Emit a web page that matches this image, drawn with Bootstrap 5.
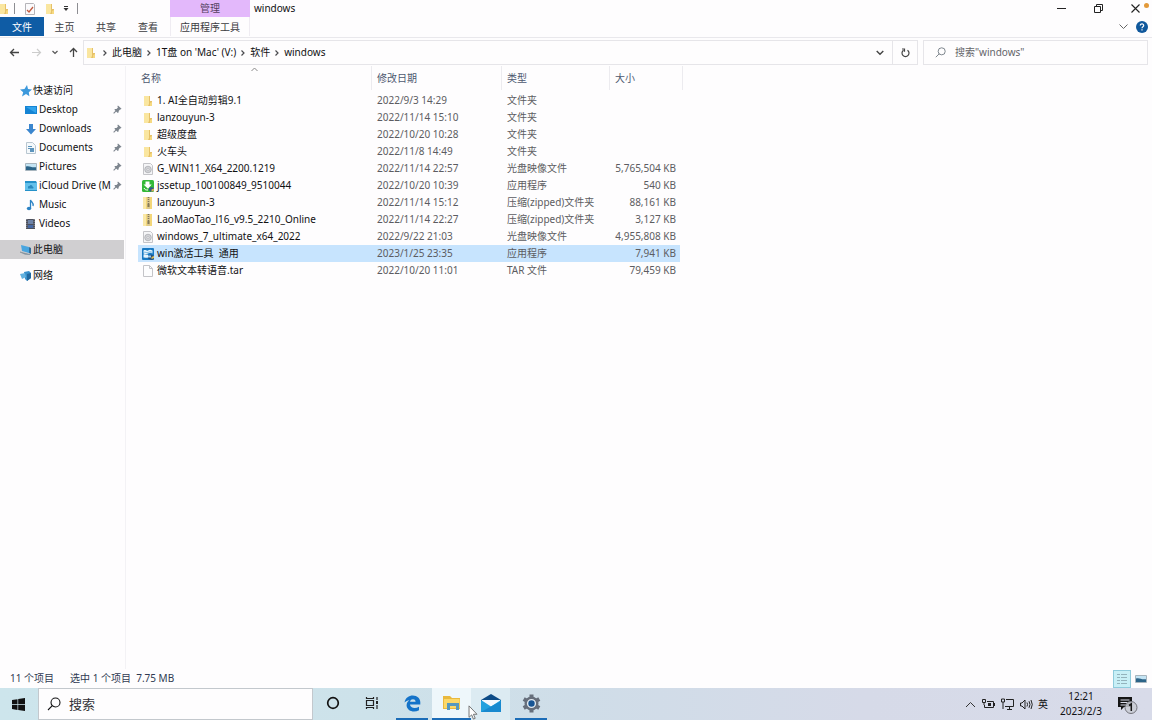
<!DOCTYPE html>
<html lang="zh-CN">
<head>
<meta charset="utf-8">
<meta name="viewport" content="width=device-width, initial-scale=1">
<title>windows</title>
<link href="https://cdn.jsdelivr.net/npm/bootstrap@5.3.0/dist/css/bootstrap.min.css" rel="stylesheet">
<style>
  body { font-family: "Noto Sans", "Noto Sans CJK SC", sans-serif; font-size: 10px; line-height: 17px; color: #111113; background: #fefdfe; }
  button, input { font: inherit; color: inherit; }
  svg { display: block; flex: none; }
  a { color: inherit; text-decoration: none; }
  .plain { background: none; border: 0; padding: 0; display: flex; align-items: center; justify-content: center; }

  /* title bar and ribbon */
  .ribbon { border-bottom: 1px solid #e9e8ec; }
  .quick { width: 170px; height: 17px; }
  .quick > * { margin-right: 6px; }
  .quick .quick-icon { width: 14px; margin-left: 2px; }
  .vline { width: 1px; height: 11px; background: #8d8d92; margin-left: 2px; }
  .tool-title { width: 80px; height: 17px; background: #e3b8fb; color: #54405f; }
  .tabs-row { height: 20px; }
  .tab-link { height: 19px; line-height: 20px; text-align: center; color: #3b3b40; width: 42px; }
  .tab-link:nth-child(2) { width: 41px; }
  .tab-link.tab-file { width: 44px; background: #0f5ca5; color: #fff; }
  .tab-link.tab-tool { width: 80px; border: solid #efecf2; border-width: 0 1px; margin-left: 1px; }
  .win-btn { width: 37px; height: 16px; }
  .dot { width: 5px; height: 5px; border-radius: 50%; background: #e39a3b; margin: 3px 3px 0 -10px; }

  /* address row */
  .addr-row { height: 28px; gap: 5px; padding: 2px 4px 1px 0; }
  .nav-btns { width: 78px; padding-left: 9px; }
  .box { border: 1px solid #e6e5e9; height: 25px; }
  .crumbs { gap: 4px; }
  .refresh { width: 25px; border-left: 1px solid #e6e5e9; height: 23px; }
  .find { width: 225px; padding-left: 11px; gap: 9px; }
  .find input, .task-search input { border: 0; outline: 0; background: none; padding: 0; min-width: 0; flex: 1; }
  .find input::placeholder { color: #65656a; opacity: 1; }

  /* side pane */
  .side { width: 126px; padding-top: 15px; border-right: 1px solid #f3f2f5; }
  .side a { display: flex; align-items: center; height: 19px; gap: 2px; padding: 0 3px 0 25px; white-space: nowrap; }
  .side a.root { padding-left: 20px; gap: 1px; }
  .side a span { flex: 1; }
  .side a.current { background: #d0cfd1; margin: 7px 1px 7px 0; }

  /* file list */
  .files { width: 545px; margin-left: 12px; table-layout: fixed; border-collapse: separate; border-spacing: 0; white-space: nowrap; }
  .files th { font-weight: 400; color: #4d5870; height: 24px; padding: 1px 0 0 5px; border-right: 1px solid #ecebef; position: relative; }
  .files th:first-child { padding-left: 3px; }
  .files td { height: 17px; padding: 0 0 0 5px; color: #5c5c61; }
  .files td:first-child { color: #111113; padding-left: 4px; }
  .files td:last-child { text-align: right; padding: 0 4px 0 0; border-right: 3px solid #fefdfe; }
  .files tbody::before { content: ""; display: block; height: 2px; }
  .files .chosen td { background: #c7e4fe; }
  .sort-mark { position: absolute; left: 50%; top: 1px; margin-left: -4px; }
  .file-name { display: flex; align-items: center; gap: 3px; white-space: pre; }

  /* status bar */
  .status { height: 19px; padding: 0 5px 0 10px; color: #303a52; gap: 16px; }
  .view-on { width: 18px; height: 18px; background: #c8eff6; border: 1px solid #8fcbdc; }

  /* taskbar */
  .taskbar { height: 32px; background: linear-gradient(90deg, #cde5ec 0%, #cde2ea 32%, #cfdde8 50%, #d6dae8 75%, #d8dbe9 100%); }
  .start { width: 38px; padding-right: 2px; }
  .task-search { width: 275px; background: #fefdfe; border: 1px solid #c3c8cd; padding-left: 8px; gap: 8px; font-size: 13px; }
  .task-search input::placeholder { color: #333338; opacity: 1; }
  .task-btn { width: 39px; border-bottom: 2px solid transparent; }
  .task-btn.running { border-bottom: 2px solid #1b6cb7; }
  .task-btn.short { width: 32px; margin: 0 4px 0 5px; }
  .task-btn.active { background: #eef7fb; }
  .task-btn.hover { background: #dcebf2; }
  .tray { gap: 5px; padding-right: 6px; }
  .clock { line-height: 15px; width: 48px; text-align: center; }
  .pointer { position: absolute; left: 36px; top: 17px; z-index: 2; }
</style>
</head>
<body>
<svg width="0" height="0" class="position-absolute">
  <defs>
    <symbol id="folder" viewBox="0 0 12 12"><path d="M2 1h6v5h2v5H2z" fill="#f6d981"/><path d="M2 1h5v10H2z" fill="#fae6a0"/><path d="M7 1h1v5h2v1l-2 1v3H6l1-2z" fill="#e6c169"/></symbol>
    <symbol id="zip" viewBox="0 0 12 12"><path d="M1 0h9v12H1z" fill="#f3d679"/><path d="M1 0h3v12H1z" fill="#fae8a8"/><path d="M5 0h3v12H5z" fill="#dcc88c"/><path d="M6.500 0v8" stroke="#81765a" stroke-width="1.500" stroke-dasharray="1 1"/><path d="M5.500 7h2v3h-2z" fill="#877a55"/></symbol>
    <symbol id="disc" viewBox="0 0 12 12"><path d="M1.500.5h7l2 2v9h-9z" fill="#f5f5f7" stroke="#c4c4c8"/><circle cx="6" cy="6.500" r="3.300" fill="#d1d2d6" stroke="#a6a7ac" stroke-width=".7"/><circle cx="6" cy="6.500" r="1" fill="#fff" stroke="#98999e" stroke-width=".5"/></symbol>
    <symbol id="page" viewBox="0 0 12 12"><path d="M1.500.5h6l3 3v8h-9z" fill="#fdfdfe" stroke="#c4c4c8"/><path d="M7.500.5v3h3" fill="none" stroke="#c4c4c8"/></symbol>
    <symbol id="setup" viewBox="0 0 12 12"><rect width="12" height="12" rx="1.500" fill="#33b837"/><path d="M3.500 1.500h4v3h2.200L6 8.800 1.500 4.500h2z" fill="#fff"/><path d="M2 8c1 2 2 2 4 2" fill="none" stroke="#fff"/><path d="M7 8l2-1 3 1v2.500L9.500 12 7 10.500z" fill="#315b86"/><path d="M9.500 9.500L12 8.500v2L9.500 12z" fill="#d8b64b"/></symbol>
    <symbol id="tool" viewBox="0 0 12 12"><rect width="12" height="12" rx="1" fill="#1879c3"/><path d="M1.500 2.500c2-1.500 3 1 4.500 0s2.500-1 4.500 0v3c-2-1-3-1-4.500 0s-2.500 1-4.500 0z" fill="#e8f5fd"/><path d="M1.500 6.500c2-1 3 1 4.500 0v3c-1.500 1-3-.5-4.500 0z" fill="#e8f5fd"/><path d="M1.500 4.500c2-1.200 3 1 4.500 0s2.500-1 4.500 0" fill="none" stroke="#4c9fd8" stroke-width=".7"/><path d="M6 8l3-1.500L12 8v3l-2.500 1L6 10.500z" fill="#284e78"/><path d="M6 7.500h3v2H6z" fill="#9dcdf0"/><path d="M9.500 9L12 8v2L9.500 11z" fill="#e1be50"/></symbol>
    <symbol id="pin" viewBox="0 0 10 10"><path d="M5.500.5l4 3.700-1.200.8-.5-.1-1.500 1.700v1.500l-1 .7-3.800-3.500.8-.9 1.600.1L5.500 2.800 4.900 1.600z" fill="#7d858e"/><path d="M4 6L.7 9.300" stroke="#7d858e" stroke-width="1.200"/></symbol>
    <symbol id="arrow" viewBox="0 0 6 8"><path d="M1.500 1.500L4 4 1.500 6.500" fill="none" stroke="#4a4a4e" stroke-width="1.200"/></symbol>
    <symbol id="lens" viewBox="0 0 14 14"><circle cx="8.500" cy="5.500" r="4.500" fill="none" stroke="currentColor" stroke-width="1.100"/><path d="M5.300 8.700L1 13" stroke="currentColor" stroke-width="1.100"/></symbol>
    <symbol id="photo" viewBox="0 0 12 12"><path d="M.5 2.500h11v7H.5z" fill="#c4e4f4" stroke="#a8b5be"/><path d="M1 5.500c4-1 5 1.500 10 .7V9H1z" fill="#2c6488"/></symbol>
  </defs>
</svg>

<div class="d-flex flex-column min-vh-100">
  <header class="ribbon">
    <div class="d-flex">
      <div class="quick d-flex align-items-center">
        <svg width="8" height="12"><use href="#folder" x="-2" width="12" height="12"/></svg>
        <span class="vline ms-0"></span>
        <button class="plain quick-icon" aria-label="属性"><svg width="12" height="12" viewBox="0 0 12 12"><path d="M1.500.5h8l1 1v10h-9z" fill="#fbfafc" stroke="#b5b4b9"/><path d="M3 7l2 2 4-5" fill="none" stroke="#c2583c" stroke-width="1.300"/></svg></button>
        <button class="plain quick-icon ms-0" aria-label="新建文件夹"><svg width="12" height="12"><use href="#folder"/></svg></button>
        <button class="plain" aria-label="自定义"><svg width="6" height="6" viewBox="0 0 6 6"><path d="M1 .5h4" stroke="#333"/><path d="M.5 2h5L3 5z" fill="#333"/></svg></button>
        <span class="vline"></span>
      </div>
      <div class="tool-title text-center">管理</div>
      <div class="ps-1 flex-grow-1">windows</div>
      <button class="plain win-btn" aria-label="最小化"><svg width="9" height="9"><path d="M0 4.500h9" stroke="#222"/></svg></button>
      <button class="plain win-btn" aria-label="还原"><svg width="9" height="9" viewBox="0 0 9 9" fill="none" stroke="#222"><path d="M.5 2.500h6v6h-6zM2.500 2V.5h6v6H7"/></svg></button>
      <button class="plain win-btn" aria-label="关闭"><svg width="9" height="9"><path d="M.5.5l8 8M8.500.5l-8 8" stroke="#222" stroke-width="1.100"/></svg></button>
      <span class="dot"></span>
    </div>
    <nav class="tabs-row d-flex align-items-start">
      <a href="#" class="tab-link tab-file">文件</a>
      <a href="#" class="tab-link">主页</a>
      <a href="#" class="tab-link">共享</a>
      <a href="#" class="tab-link">查看</a>
      <a href="#" class="tab-link tab-tool">应用程序工具</a>
      <div class="ms-auto d-flex align-items-center h-100 gap-2 pe-1">
        <button class="plain" aria-label="折叠功能区"><svg width="9" height="6"><path d="M.5.5l4 4 4-4" fill="none" stroke="#666"/></svg></button>
        <button class="plain" aria-label="帮助"><svg width="12" height="12" viewBox="0 0 12 12"><circle cx="6" cy="6" r="6" fill="#10589c"/><path d="M4.300 4.600C4.300 2.300 7.800 2.400 7.700 4.600 7.600 5.800 6 5.600 6 7.200M6 8.200v1.300" fill="none" stroke="#fff" stroke-width="1.200"/></svg></button>
      </div>
    </nav>
  </header>

  <div class="addr-row d-flex align-items-center">
    <div class="nav-btns d-flex align-items-center justify-content-between">
      <button class="plain" aria-label="后退"><svg width="11" height="9" fill="none" stroke="#444" stroke-width="1.300"><path d="M10 4.500H1.500M5 1L1.500 4.500 5 8"/></svg></button>
      <button class="plain ps-1" aria-label="前进"><svg width="11" height="9" fill="none" stroke="#ccc" stroke-width="1.200"><path d="M1 4.500h8.500M6 1l3.500 3.500L6 8"/></svg></button>
      <button class="plain ps-1" aria-label="最近位置"><svg width="6" height="5"><path d="M.5 1L3 3.500 5.500 1" fill="none" stroke="#555" stroke-width="1.200"/></svg></button>
      <button class="plain ps-1" aria-label="上移"><svg width="9" height="11" fill="none" stroke="#444" stroke-width="1.300"><path d="M4.500 10V1.500M1 5l3.500-3.500L8 5"/></svg></button>
    </div>
    <div class="box crumbs d-flex align-items-center flex-grow-1">
      <svg width="14" height="12"><use href="#folder"/></svg>
      <svg width="6" height="8"><use href="#arrow"/></svg>
      <a href="#">此电脑</a>
      <svg width="6" height="8"><use href="#arrow"/></svg>
      <a href="#">1T盘 on 'Mac' (V:)</a>
      <svg width="6" height="8"><use href="#arrow"/></svg>
      <a href="#">软件</a>
      <svg width="6" height="8"><use href="#arrow"/></svg>
      <a href="#">windows</a>
      <button class="plain ms-auto pe-1" aria-label="历史记录"><svg width="8" height="6"><path d="M.7 1L4 4.300 7.300 1" fill="none" stroke="#444" stroke-width="1.400"/></svg></button>
      <button class="plain refresh" aria-label="刷新"><svg width="9" height="10" viewBox="0 0 9 10" fill="none" stroke="#444" stroke-width="1.200"><path d="M2.500 2.200a3.500 3.500 0 1 0 4 0M1 1h2.500v2.800"/></svg></button>
    </div>
    <div class="box find d-flex align-items-center">
      <svg width="11" height="11" class="text-secondary"><use href="#lens"/></svg>
      <input type="text" aria-label="搜索" placeholder='搜索"windows"'>
    </div>
  </div>

  <main class="d-flex flex-grow-1">
    <nav class="side">
      <a href="#" class="root"><svg width="12" height="12" viewBox="0 0 12 12"><path d="M7 0l1 4 4 .6-3.200 2.600.6 4L6 9 2 11.500l1.200-4.300L0 4.500l4.500-.6z" fill="#3d99dc"/></svg><span>快速访问</span></a>
      <a href="#"><svg width="12" height="12"><path d="M0 2h12v8H0z" fill="#1584d4"/><path d="M1 3h10v6z" fill="#32a4ec"/></svg><span>Desktop</span><svg width="9" height="9"><use href="#pin"/></svg></a>
      <a href="#"><svg width="12" height="12"><path d="M4 1h4v5h3L6 11.500 1 6h3z" fill="#3b86ce"/></svg><span>Downloads</span><svg width="9" height="9"><use href="#pin"/></svg></a>
      <a href="#"><svg width="12" height="12"><path d="M1.500.5h6l3 3v8h-9z" fill="#f4f8fb" stroke="#b9c6d0"/><path d="M3 4.500h4M3 6.500h2" stroke="#5c94bd"/><path d="M5 6h4v4H5z" fill="#5c94bd"/></svg><span>Documents</span><svg width="9" height="9"><use href="#pin"/></svg></a>
      <a href="#"><svg width="12" height="12"><use href="#photo"/></svg><span>Pictures</span><svg width="9" height="9"><use href="#pin"/></svg></a>
      <a href="#"><svg width="12" height="12"><path d="M0 1h11l1 2v8H0z" fill="#2591c9"/><path d="M0 3h12v7H0z" fill="#62c0eb"/><path d="M3 8c-.5-2 1-2 1.500-2 1-2 3-1 3 .5C9 7 8.500 8.500 8 8.500H3z" fill="#2889be"/></svg><span>iCloud Drive (M</span><svg width="9" height="9"><use href="#pin"/></svg></a>
      <a href="#"><svg width="12" height="12"><path d="M5.500 9.500V1c.5 2 3.500 2.500 2.500 6" stroke="#2b82c4" stroke-width="1.300" fill="none"/><ellipse cx="4" cy="9.500" rx="2.200" ry="1.700" fill="#2b82c4"/></svg><span>Music</span></a>
      <a href="#"><svg width="12" height="12"><path d="M1 1h9v10H1z" fill="#4d515d"/><path d="M3 2h5v4H3z" fill="#6d83a8"/><path d="M3 7h5v3H3z" fill="#4668a5"/><path d="M1.800 1v10M9.200 1v10" stroke="#9598a4" stroke-dasharray="1 1"/></svg><span>Videos</span></a>
      <a href="#" class="root current"><svg width="12" height="12"><path d="M1 1l8 2v6L2 7z" fill="#48a5df"/><path d="M9 3l2 1v6L9 9z" fill="#306b99"/><path d="M0 8l6 1.500 4 1-5-.2z" fill="#7f8e9b" stroke="#7f8e9b" stroke-width=".6"/></svg><span>此电脑</span></a>
      <a href="#" class="root"><svg width="12" height="12"><path d="M4 2l5-1 2 2v5l-4 3-2-2z" fill="#3890cb"/><path d="M0 4l5-1 1 4-4 2z" fill="#62b1df"/><path d="M7 4l4-1v5L7 11z" fill="#23689e"/></svg><span>网络</span></a>
    </nav>

    <section>
      <table class="files">
        <colgroup><col style="width:234px"><col style="width:130px"><col style="width:108px"><col style="width:73px"></colgroup>
        <thead><tr>
          <th>名称<svg class="sort-mark" width="7" height="5"><path d="M.5 4l3-3 3 3" fill="none" stroke="#888"/></svg></th>
          <th>修改日期</th><th>类型</th><th>大小</th>
        </tr></thead>
        <tbody>
          <tr><td><div class="file-name"><svg width="12" height="12"><use href="#folder"/></svg>1. AI全自动剪辑9.1</div></td><td>2022/9/3 14:29</td><td>文件夹</td><td></td></tr>
          <tr><td><div class="file-name"><svg width="12" height="12"><use href="#folder"/></svg>lanzouyun-3</div></td><td>2022/11/14 15:10</td><td>文件夹</td><td></td></tr>
          <tr><td><div class="file-name"><svg width="12" height="12"><use href="#folder"/></svg>超级度盘</div></td><td>2022/10/20 10:28</td><td>文件夹</td><td></td></tr>
          <tr><td><div class="file-name"><svg width="12" height="12"><use href="#folder"/></svg>火车头</div></td><td>2022/11/8 14:49</td><td>文件夹</td><td></td></tr>
          <tr><td><div class="file-name"><svg width="12" height="12"><use href="#disc"/></svg>G_WIN11_X64_2200.1219</div></td><td>2022/11/14 22:57</td><td>光盘映像文件</td><td>5,765,504 KB</td></tr>
          <tr><td><div class="file-name"><svg width="12" height="12"><use href="#setup"/></svg>jssetup_100100849_9510044</div></td><td>2022/10/20 10:39</td><td>应用程序</td><td>540 KB</td></tr>
          <tr><td><div class="file-name"><svg width="12" height="12"><use href="#zip"/></svg>lanzouyun-3</div></td><td>2022/11/14 15:12</td><td>压缩(zipped)文件夹</td><td>88,161 KB</td></tr>
          <tr><td><div class="file-name"><svg width="12" height="12"><use href="#zip"/></svg>LaoMaoTao_l16_v9.5_2210_Online</div></td><td>2022/11/14 22:27</td><td>压缩(zipped)文件夹</td><td>3,127 KB</td></tr>
          <tr><td><div class="file-name"><svg width="12" height="12"><use href="#disc"/></svg>windows_7_ultimate_x64_2022</div></td><td>2022/9/22 21:03</td><td>光盘映像文件</td><td>4,955,808 KB</td></tr>
          <tr class="chosen"><td><div class="file-name"><svg width="12" height="12"><use href="#tool"/></svg>win激活工具  通用</div></td><td>2023/1/25 23:35</td><td>应用程序</td><td>7,941 KB</td></tr>
          <tr><td><div class="file-name"><svg width="12" height="12"><use href="#page"/></svg>微软文本转语音.tar</div></td><td>2022/10/20 11:01</td><td>TAR 文件</td><td>79,459 KB</td></tr>
        </tbody>
      </table>
    </section>
  </main>

  <div class="status d-flex align-items-center">
    <span>11 个项目</span>
    <span>选中 1 个项目&nbsp; 7.75 MB</span>
    <div class="ms-auto d-flex gap-1 align-items-center">
      <button class="plain view-on" aria-label="详细信息"><svg width="12" height="12"><path d="M1 1.500h3M1 4.500h3M1 7.500h3M1 10.500h3M5 1.500h6M5 4.500h6M5 7.500h6M5 10.500h6" stroke="#93b3bc"/></svg></button>
      <button class="plain" aria-label="大图标"><svg width="12" height="12"><use href="#photo"/></svg></button>
    </div>
  </div>

  <footer class="taskbar d-flex">
    <button class="plain start" aria-label="开始"><svg width="13" height="13" viewBox="0 0 13 13"><path d="M0 2l5.500-.8v5H0zM6.200 1.100L13 0v6.200H6.200zM0 6.900h5.500v5L0 11.100zM6.200 6.900H13V13l-6.800-1z" fill="#111"/></svg></button>
    <div class="task-search d-flex align-items-center">
      <svg width="14" height="14"><use href="#lens"/></svg>
      <input type="text" aria-label="搜索" placeholder="搜索">
    </div>
    <button class="plain task-btn" aria-label="Cortana"><svg width="14" height="14"><circle cx="7" cy="7" r="5.300" fill="none" stroke="#111" stroke-width="1.700"/></svg></button>
    <button class="plain task-btn" aria-label="任务视图"><svg width="14" height="12" viewBox="0 0 14 12" fill="none" stroke="#222"><path d="M1.500 3.500h7v5h-7zM1.500 0v1.500h7V0M1.500 12v-1.500h7V12M12 0v3M12 8v4" stroke-width="1.200"/><path d="M12 4v3" stroke-width="2"/></svg></button>
    <button class="plain task-btn running short" aria-label="Edge"><svg width="17" height="17" viewBox="0 0 17 17"><path d="M.5 7.500C1.500 2.500 5 .5 8.700.5c4.800 0 7.800 3.300 7.600 7.200v1.800H6c.2 3.600 5.300 4.400 9 2.200v3.500C10 18 3 16.200 2.600 10.500c-.1-2.200 1-4 2.800-5.200C3.400 5.600 1.700 6.300.5 7.500zM6 6.800h5.600C11.600 3.500 6.500 3.500 6 6.800z" fill="#1473c9"/></svg></button>
    <div class="position-relative d-flex">
      <button class="plain task-btn running active" aria-label="文件资源管理器"><svg width="18" height="16" viewBox="0 0 18 16"><path d="M0 1h7l2 2h8v11H0z" fill="#e9b93e"/><path d="M1 4h15.500v9H1z" fill="#fbd868"/><path d="M4 8h12v7h-3v-4H7v4H4z" fill="#5598bf"/></svg></button>
      <svg class="pointer" width="10" height="15" viewBox="0 0 11 17"><path d="M1 1v13l3-2.800 2 4.800 2-.9-2-4.600h4z" fill="#fff" stroke="#666"/></svg>
    </div>
    <button class="plain task-btn hover" aria-label="邮件"><svg width="20" height="18" viewBox="0 0 20 18"><path d="M0 6l10-6 10 6v3H0z" fill="#0d4b86"/><path d="M1 6h18v6H1z" fill="#f3f8fd"/><path d="M0 6l10 6.500L20 6v12H0z" fill="#21a1de"/><path d="M0 18L20 7v11z" fill="#1789cf"/></svg></button>
    <button class="plain task-btn running short" aria-label="设置"><svg width="19" height="19" viewBox="0 0 19 19"><g stroke="#666e7b" stroke-width="4"><path d="M9.500.5v18M1.700 5l15.600 9M17.300 5L1.700 14"/></g><circle cx="9.500" cy="9.500" r="5.800" fill="#e3ebf2" stroke="#666e7b" stroke-width="2.400"/><circle cx="9.500" cy="9.500" r="3.200" fill="#185594"/></svg></button>
    <div class="tray ms-auto d-flex align-items-center">
      <button class="plain" aria-label="显示隐藏的图标"><svg width="11" height="7"><path d="M1 6l4.500-4.500L10 6" fill="none" stroke="#333"/></svg></button>
      <svg width="15" height="11" fill="none" stroke="#222"><path d="M6 2.500h6.500v6H3.500V6M13.500 4v3"/><path d="M7 4h3v3H7z" fill="#222" stroke="none"/><path d="M1.500.5h3v3h-3zM3 4v2"/></svg>
      <svg width="14" height="12" fill="none" stroke="#222"><path d="M5 1.500h7.500v7H4M6 11.500h5M8.500 8v3M.5 1v3h3V1zM2 4v7"/></svg>
      <svg width="13" height="11" fill="none" stroke="#222"><path d="M.5 4v3H2l3 3V1L2 4zM7 3.500q1 2 0 4M9 2.200q2 3.300 0 6.600M11 1q2.500 4.500 0 9"/></svg>
      <span class="fs-ime">英</span>
      <time class="clock ms-1">12:21<br>2023/2/3</time>
      <button class="plain ms-2 me-2" aria-label="通知"><svg width="20" height="20" viewBox="0 0 20 20"><path d="M0 3h14v10H6l-3 3v-3H0z" fill="#151515"/><path d="M2.500 6h9M2.500 8.500h9M2.500 11h6" stroke="#d8dbe9"/><circle cx="13" cy="13.500" r="6" fill="#c9cbd3" fill-opacity=".85" stroke="#74757c"/><path d="M11 11.500l2.300-1.500v7" fill="none" stroke="#151515" stroke-width="1.500"/></svg></button>
    </div>
  </footer>
</div>
<script src="https://cdn.jsdelivr.net/npm/bootstrap@5.3.0/dist/js/bootstrap.bundle.min.js"></script>
</body>
</html>
